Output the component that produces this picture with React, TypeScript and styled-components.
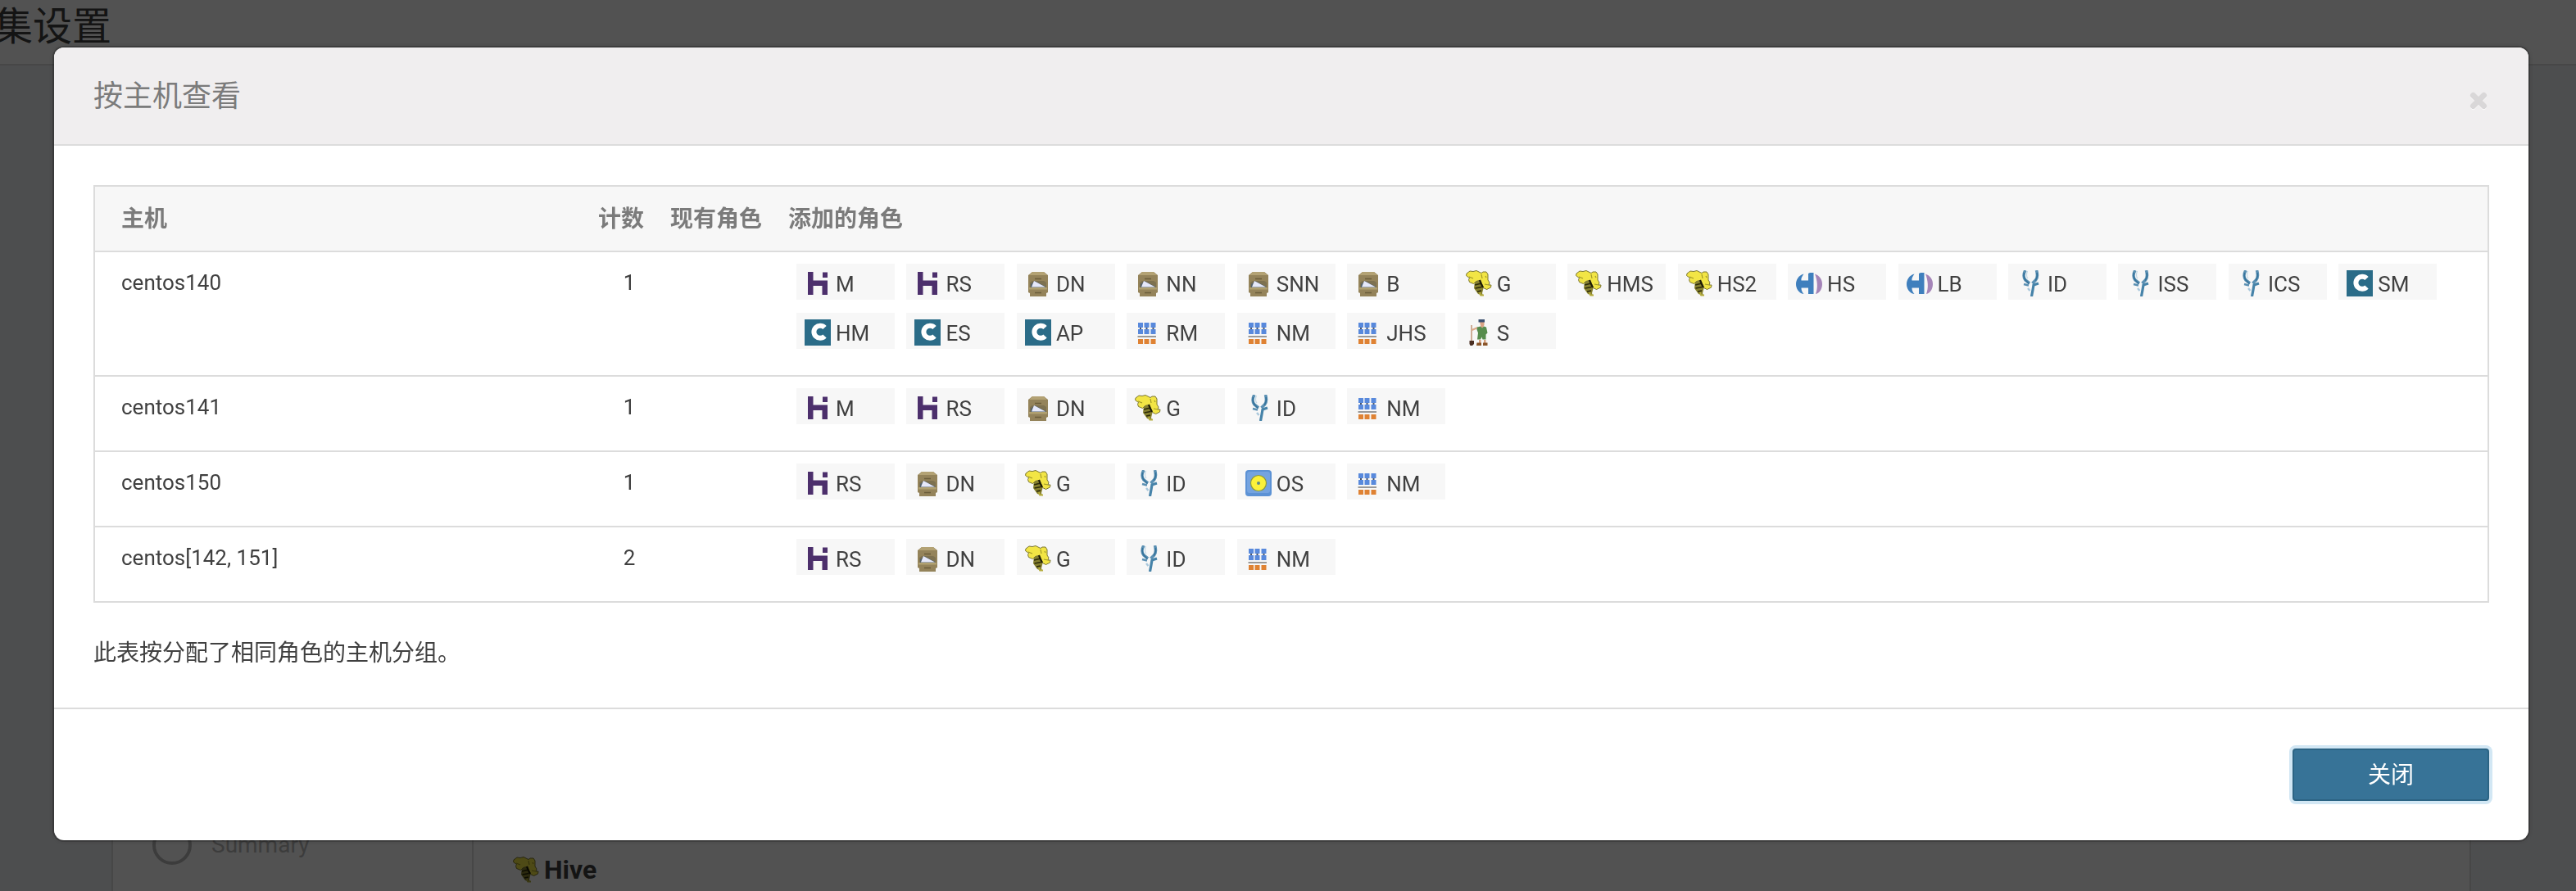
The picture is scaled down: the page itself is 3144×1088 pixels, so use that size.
import React from "react";
import styled, { createGlobalStyle } from "styled-components";

const GlobalStyle = createGlobalStyle`
  *, *::before, *::after { box-sizing: border-box; }
  body {
    margin: 0;
    background: #f0f2f6;
    color: #404040;
    font-family: Roboto, "Noto Sans CJK SC", sans-serif;
    font-size: 26px;
    line-height: 40px;
  }
`;

const line = "#dcdcdc";

/* ---------- page behind the dialog ---------- */

const Page = styled.div`
  display: flex;
  flex-direction: column;
  height: 100vh;
  overflow: hidden;
`;

const TopBar = styled.header`
  display: flex;
  align-items: center;
  height: 80px;
  padding-bottom: 12px;
  background: #fff;
  border-bottom: 2px solid ${line};
`;

const PageTitle = styled.h1`
  margin: 0 0 0 -8px;
  font-size: 48px;
  line-height: 64px;
  font-weight: 400;
  color: #404040;
`;

const Wizard = styled.main`
  flex: 1;
  display: grid;
  grid-template-columns: 440px 1fr;
  align-items: stretch;
  margin: 40px 128px 0 136px;
  background: #fff;
  border: 2px solid ${line};
  border-bottom: 0;
`;

const Steps = styled.nav`
  display: flex;
  align-items: flex-end;
  padding: 0 48px 32px;
  border-right: 2px solid ${line};
`;

const Step = styled.a`
  display: flex;
  align-items: center;
  gap: 24px;
  font-size: 28px;
  line-height: 48px;
  color: #bbb;
  text-decoration: none;
`;

const StepCircle = styled.span`
  width: 48px;
  height: 48px;
  border: 4px solid #bbb;
  border-radius: 50%;
`;

const Services = styled.section`
  display: flex;
  align-items: flex-end;
  padding: 0 48px 6px;
`;

const ServiceTitle = styled.h2`
  display: flex;
  align-items: center;
  gap: 6px;
  margin: 0;
  font-size: 32px;
  line-height: 40px;
  font-weight: 700;
`;

/* ---------- dialog ---------- */

const Backdrop = styled.div`
  position: fixed;
  inset: 0;
  display: flex;
  align-items: flex-start;
  padding: 58px 58px 62px 66px;
  background: rgba(0, 0, 0, 0.68);
  overflow: auto;
`;

const Dialog = styled.section`
  flex: 1;
  min-width: 0;
  background: #fff;
  border-radius: 12px;
  box-shadow: 0 0 0 2px rgba(0, 0, 0, 0.2), 0 0 8px rgba(0, 0, 0, 0.2);
`;

const DialogHeader = styled.header`
  display: flex;
  align-items: center;
  justify-content: space-between;
  height: 120px;
  padding: 2px 48px 0;
  background: #f0eeef;
  border-bottom: 2px solid ${line};
  border-radius: 12px 12px 0 0;
`;

const DialogTitle = styled.h2`
  margin: 0;
  font-size: 36px;
  line-height: 40px;
  font-weight: 400;
  color: #7b7b7b;
`;

const CloseIconButton = styled.button`
  display: flex;
  margin: 12px 0 0;
  padding: 0;
  border: 0;
  background: none;
  cursor: pointer;
`;

const DialogBody = styled.div`
  padding: 48px 48px 46px;
`;

const Note = styled.p`
  margin: 42px 0 0;
  font-size: 28px;
`;

const DialogFooter = styled.footer`
  display: flex;
  justify-content: flex-end;
  padding: 48px;
  border-top: 2px solid ${line};
`;

const PrimaryButton = styled.button`
  width: 240px;
  height: 64px;
  padding: 2px 0 0;
  border: 2px solid #2c6484;
  border-radius: 4px;
  background: #377397;
  box-shadow: 0 0 0 4px #d2e7f4;
  color: #fff;
  font: inherit;
  font-size: 28px;
  cursor: pointer;
`;

/* ---------- table ---------- */

const Table = styled.table`
  width: 100%;
  table-layout: fixed;
  border-collapse: separate;
  border-spacing: 0;
  border: 2px solid ${line};
`;

const Col = styled.col<{ $width?: number }>`
  width: ${(p) => (p.$width ? `${p.$width}px` : "auto")};
`;

const Th = styled.th<{ $first?: boolean }>`
  height: 78px;
  padding: 2px 16px 0 ${(p) => (p.$first ? 32 : 16)}px;
  background: #f7f7f7;
  text-align: left;
  white-space: nowrap;
  font-size: 28px;
  font-weight: 700;
  color: #7b7b7b;
`;

const Td = styled.td<{ $kind?: "host" | "count" | "roles" }>`
  border-top: 2px solid ${line};
  vertical-align: top;
  text-align: ${(p) => (p.$kind === "count" ? "center" : "left")};
  padding: ${(p) =>
    p.$kind === "roles"
      ? "14px 16px 16px 26px"
      : p.$kind === "count"
        ? "17px 16px 16px 36px"
        : "17px 16px 16px 32px"};
`;

const RoleList = styled.div`
  line-height: 44px;
`;

const Chip = styled.span`
  display: inline-flex;
  align-items: flex-start;
  gap: 6px;
  width: 120px;
  height: 44px;
  margin: 0 8px 16px 0;
  padding: 8px 0 0 10px;
  vertical-align: top;
  background: #f7f7f7;
  line-height: 34px;
`;

/* ---------- icons ---------- */

type Kind = "hbase" | "hdfs" | "hive" | "hue" | "impala" | "cm" | "yarn" | "sentry" | "oozie";

const Svg = styled.svg`
  display: block;
  flex: none;
`;

const drawings: Record<Kind, React.ReactNode> = {
  hbase: (
    <g fill="#4c2f6c">
      <path d="M4 2h6.500v10.500H28V30h-6.500V19h-11v11H4z" />
      <rect x="22" y="2.500" width="6" height="6.500" />
    </g>
  ),
  hdfs: (
    <g>
      <path d="M9 2h14l5 4v21l-2 1v4H6v-4l-2-1V6z" fill="#94835a" />
      <path d="M9 2h14l4 4H5z" fill="#b3a274" />
      <path d="M12 10.500h8M12 27.500h8" stroke="#6a5c3a" strokeWidth="1.400" />
      <path d="M6 15l3-2h14l3 2v6H6z" fill="#7d7150" />
      <path d="M7 21v-4l5-4 13 7v1z" fill="#56626a" />
      <path d="M8 20.500l3-7.500 14 7.500z" fill="#e6e9fa" />
      <path d="M5 21h22v2.500H5z" fill="#b0a070" />
    </g>
  ),
  hive: (
    <g strokeLinejoin="round">
      <path d="M11 13l8-2 3 9-1 4-1 4 1 3-6-2-5-7z" fill="#86802f" />
      <path d="M11 18l8-2M11.500 22l8-1.500M14 26l5-1" stroke="#2b2909" strokeWidth="1.600" />
      <path d="M17 27l1 3.500h4" stroke="#b5ad3c" strokeWidth="1.800" fill="none" />
      <path d="M1 4l4-3 4 .500 4-1 4 2 2 1 2-1.500h4l2 3 0 7 2 3-1 3 3 0-.500 3-5 2.500-4-2-2-5-3-4-4 1-3 3-5-2-1-3 1-2-4-3z" fill="#f2e545" stroke="#7c7733" strokeWidth="1" />
      <path d="M4 8l5 2M19 5l1 5M24 7l1 2M23 17l5 1" stroke="#a09828" strokeWidth="1.200" fill="none" />
      <path d="M17 12l2 5 2 4" stroke="#1d1b06" strokeWidth="2.200" fill="none" />
    </g>
  ),
  hue: (
    <g>
      <path d="M9.500 4.500C7 8 6 10 6.500 12.500H15V4l2-1h4.500v26H15v-7.500H6.500C6.500 24 7 26 9.500 29 3 28 0 22 0 17S3 6 9.500 4.500z" fill="#3f7fbd" />
      <path d="M23 4.500c6 2 9 7 9 12.500s-3 11-8 12c1.500-4 2-8 1.800-12S24.500 8 23 4.500z" fill="#a585b8" />
    </g>
  ),
  impala: (
    <g fill="none" strokeLinecap="butt">
      <path d="M11 0C8.500 4 8.500 9 11 12l5 4M24.500 0c1.500 5 1.500 9-1 12l-4 4" stroke="#5b90b3" strokeWidth="3.600" />
      <path d="M9.500 3c-1 4 0 7 2 9.500l4 4M25 3c1 4 0 7-2 9.500" stroke="#35739b" strokeWidth="1.600" />
      <path d="M13.500 1c-1.500 4-1.500 7 .500 9" stroke="#c3d8e5" strokeWidth="1.200" />
      <path d="M9 17l6 1.500" stroke="#5b90b3" strokeWidth="2.400" />
      <path d="M27 16l-6 2-1 6-1.500 8" stroke="#4683a9" strokeWidth="3.200" />
      <path d="M14 22l2.500 3" stroke="#a9c8dc" strokeWidth="2.400" />
    </g>
  ),
  cm: (
    <g>
      <rect width="32" height="32" fill="#2b6c88" />
      <path d="M24.500 10A7.600 7.600 0 1 0 24.500 20.500" fill="none" stroke="#fff" strokeWidth="6" />
    </g>
  ),
  yarn: (
    <g>
      <path d="M7 8v6M14.500 8v6M22.500 8v6" stroke="#49546b" strokeWidth="2" />
      <path d="M4 4h6v6H4zM11.500 4h6v6h-6zM19.500 4h6v6h-6zM4 12h6v6H4zM11.500 12h6v6h-6zM19.500 12h6v6h-6z" fill="#5889dc" />
      <path d="M3.500 20h22.500v2H3.500z" fill="#999" />
      <path d="M4 24h6v6H4zM11.500 24h6v6h-6zM19.500 24h6v6h-6z" fill="#df8233" />
    </g>
  ),
  sentry: (
    <g>
      <path d="M7 7v20" stroke="#c9a58c" strokeWidth="1.800" />
      <path d="M4.500 26h5.500v4l-2 2H5.500l-1-2z" fill="#4a2e22" />
      <path d="M14.500 10l-7 3" stroke="#dcaa8a" strokeWidth="2.200" />
      <path d="M17 3h5.500v4l-1.500 3h-2.500z" fill="#d9a384" />
      <path d="M15.500 0h7.500v3.500h-7.500z" fill="#3c5170" />
      <path d="M14 9.500l4-1 2 2 2-2 3 1 1.500 7-2 2v6h-4l-1-3-1.500 3h-4l1-8-1.500-4z" fill="#578c4d" />
      <path d="M16 25h2.500v4H16zM22 25h2.500v4H22z" fill="#d5a07e" />
      <path d="M13.500 28.500h5.500V32h-6zM21 28.500h5.500V32H21z" fill="#8a5428" />
    </g>
  ),
  oozie: (
    <g>
      <rect width="32" height="32" rx="4" fill="#5c92d5" />
      <rect x="2" y="2" width="28" height="26" rx="3" fill="#74a3e0" />
      <circle cx="16" cy="16" r="9.500" fill="#fbf13a" stroke="#8e9a3c" strokeWidth="1.200" />
      <circle cx="16" cy="16" r="2" fill="#5c8a8a" />
    </g>
  ),
};

const ServiceIcon = ({ kind }: { kind: Kind }) => (
  <Svg width="32" height="32" viewBox="0 0 32 32" aria-hidden="true">
    {drawings[kind]}
  </Svg>
);

/* ---------- data ---------- */

type Role = [Kind, string];

const rows: { host: string; count: number; roles: Role[] }[] = [
  {
    host: "centos140",
    count: 1,
    roles: [
      ["hbase", "M"], ["hbase", "RS"], ["hdfs", "DN"], ["hdfs", "NN"], ["hdfs", "SNN"],
      ["hdfs", "B"], ["hive", "G"], ["hive", "HMS"], ["hive", "HS2"], ["hue", "HS"],
      ["hue", "LB"], ["impala", "ID"], ["impala", "ISS"], ["impala", "ICS"], ["cm", "SM"],
      ["cm", "HM"], ["cm", "ES"], ["cm", "AP"], ["yarn", "RM"], ["yarn", "NM"],
      ["yarn", "JHS"], ["sentry", "S"],
    ],
  },
  {
    host: "centos141",
    count: 1,
    roles: [["hbase", "M"], ["hbase", "RS"], ["hdfs", "DN"], ["hive", "G"], ["impala", "ID"], ["yarn", "NM"]],
  },
  {
    host: "centos150",
    count: 1,
    roles: [["hbase", "RS"], ["hdfs", "DN"], ["hive", "G"], ["impala", "ID"], ["oozie", "OS"], ["yarn", "NM"]],
  },
  {
    host: "centos[142, 151]",
    count: 2,
    roles: [["hbase", "RS"], ["hdfs", "DN"], ["hive", "G"], ["impala", "ID"], ["yarn", "NM"]],
  },
];

export default function App() {
  return (
    <>
      <GlobalStyle />
      <Page>
        <TopBar>
          <PageTitle>集设置</PageTitle>
        </TopBar>
        <Wizard>
          <Steps>
            <Step href="#summary">
              <StepCircle />
              Summary
            </Step>
          </Steps>
          <Services>
            <ServiceTitle>
              <ServiceIcon kind="hive" />
              Hive
            </ServiceTitle>
          </Services>
        </Wizard>
      </Page>
      <Backdrop>
        <Dialog role="dialog" aria-modal="true" aria-labelledby="dialog-title">
          <DialogHeader>
            <DialogTitle id="dialog-title">按主机查看</DialogTitle>
            <CloseIconButton type="button" aria-label="关闭">
              <Svg width="24" height="24" viewBox="0 0 24 24" aria-hidden="true">
                <path d="M4.500 6l13 13M17.500 6L4.500 19" stroke="#fff" strokeWidth="6" strokeLinecap="round" />
                <path d="M4.500 4.500l13 13M17.500 4.500L4.500 17.500" stroke="#d9d7d8" strokeWidth="7" strokeLinecap="round" />
              </Svg>
            </CloseIconButton>
          </DialogHeader>
          <DialogBody>
            <Table>
              <colgroup>
                <Col $width={598} />
                <Col $width={88} />
                <Col $width={144} />
                <Col />
              </colgroup>
              <thead>
                <tr>
                  <Th $first>主机</Th>
                  <Th>计数</Th>
                  <Th>现有角色</Th>
                  <Th>添加的角色</Th>
                </tr>
              </thead>
              <tbody>
                {rows.map((row) => (
                  <tr key={row.host}>
                    <Td $kind="host">{row.host}</Td>
                    <Td $kind="count">{row.count}</Td>
                    <Td />
                    <Td $kind="roles">
                      <RoleList>
                        {row.roles.map(([kind, label]) => (
                          <React.Fragment key={kind + label}>
                            <Chip>
                              <ServiceIcon kind={kind} />
                              {label}
                            </Chip>{" "}
                          </React.Fragment>
                        ))}
                      </RoleList>
                    </Td>
                  </tr>
                ))}
              </tbody>
            </Table>
            <Note>此表按分配了相同角色的主机分组。</Note>
          </DialogBody>
          <DialogFooter>
            <PrimaryButton type="button">关闭</PrimaryButton>
          </DialogFooter>
        </Dialog>
      </Backdrop>
    </>
  );
}
